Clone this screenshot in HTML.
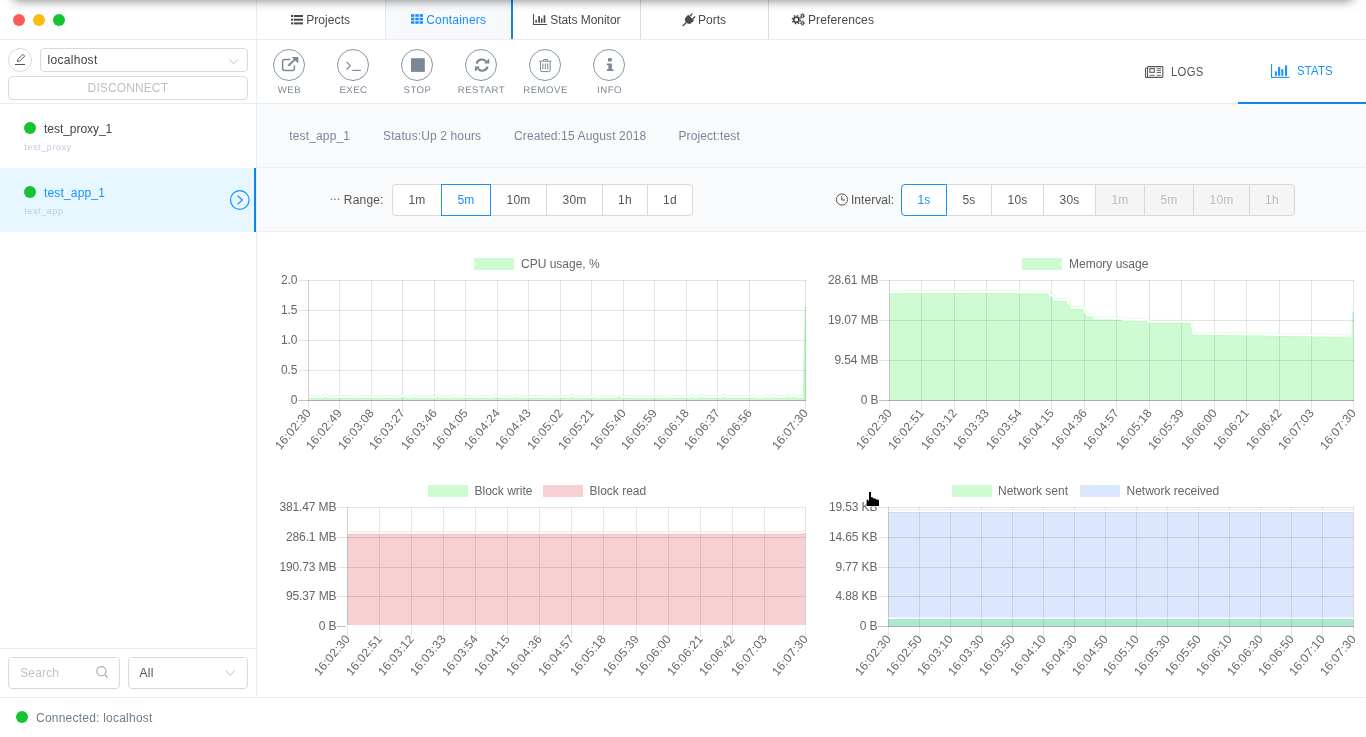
<!DOCTYPE html>
<html><head><meta charset="utf-8"><title>Containers</title>
<style>
*{box-sizing:border-box;margin:0;padding:0}
html,body{width:1366px;height:737px;overflow:hidden;background:#fff;font-family:"Liberation Sans",sans-serif;font-size:12px;color:#4a4a4a}
.abs{position:absolute}
#root{position:relative;width:1366px;height:737px;overflow:hidden;background:transparent;will-change:transform}
.hl{position:absolute;height:1px;background:#e8eef6}
.vl{position:absolute;width:1px;background:#e8eef6}
.tl{position:absolute;top:14px;width:12px;height:12px;border-radius:50%}
.tabsep{position:absolute;top:0;width:1px;height:39px;background:#ddd}
.tx{position:absolute;line-height:14px;white-space:nowrap}
.tabt{top:13px;color:#4a4a4a}
.cbtn{position:absolute;top:49px;width:32px;height:32px;border:1px solid #8893a3;border-radius:50%}
.clab{position:absolute;top:85px;text-rendering:geometricPrecision;width:80px;text-align:center;color:#7c8797;line-height:12px;white-space:nowrap}
.info{top:129px;color:#7a8697}
.seg{position:absolute;top:184px;height:32px;border:1px solid #d9d9d9;background:#fff;line-height:30px;text-align:center;color:#555;white-space:nowrap}
.seg.sel{border-color:#1890ff;color:#1890ff;z-index:2}
.seg.dis{background:#f5f5f5;color:#bdbdbd}
.ct{font-family:"Liberation Sans",sans-serif;font-size:12px;fill:#666}
svg{position:absolute;left:0;top:0;overflow:visible}
</style></head>
<body><div id="root">

<!-- backgrounds -->
<div class="abs" style="left:386px;top:0;width:125px;height:39px;background:#f7f9fc"></div>
<div class="abs" style="left:511px;top:0;width:2px;height:39px;background:#1085e6"></div>
<div class="abs" style="left:257px;top:104px;width:1109px;height:128px;background:#f9fafc"></div>
<div class="abs" style="left:0;top:168px;width:254px;height:64px;background:#e6f7ff"></div>

<!-- traffic lights -->
<div class="tl" style="left:13px;background:#fc5b57"></div>
<div class="tl" style="left:33px;background:#fdbc12"></div>
<div class="tl" style="left:53px;background:#14c431"></div>

<!-- sidebar header -->
<div class="abs" style="left:8px;top:48px;width:24px;height:24px;border:1px solid #d9d9d9;border-radius:50%"></div>
<div class="abs" style="left:40px;top:48px;width:208px;height:24px;border:1px solid #d9d9d9;border-radius:4px"></div>
<div class="tx" style="left:47.6px;top:53px;color:#444;font-size:12px;letter-spacing:0.282px">localhost</div>
<div class="abs" style="left:8px;top:76px;width:240px;height:24px;border:1px solid #d9d9d9;border-radius:4px"></div>
<div class="tx" style="left:87.6px;top:81px;color:#bfbfbf;font-size:12px;letter-spacing:0.116px">DISCONNECT</div>

<!-- list -->
<div class="abs" style="left:24px;top:122px;width:12px;height:12px;border-radius:50%;background:#14c431"></div>
<div class="tx" style="left:44px;top:122px;color:#444;font-size:12px;letter-spacing:-0.042px">test_proxy_1</div>
<div class="tx" style="left:24.2px;top:142px;line-height:10px;color:#bccadd;font-size:9px;letter-spacing:.62px;text-rendering:geometricPrecision">test_proxy</div>

<div class="abs" style="left:24px;top:186px;width:12px;height:12px;border-radius:50%;background:#14c431"></div>
<div class="tx" style="left:44px;top:186px;color:#1890ff;font-size:12px;letter-spacing:0.162px">test_app_1</div>
<div class="tx" style="left:24.2px;top:206px;line-height:10px;color:#c1cbd4;font-size:9px;letter-spacing:.62px;text-rendering:geometricPrecision">test_app</div>

<!-- sidebar footer -->
<div class="abs" style="left:8px;top:657px;width:112px;height:32px;border:1px solid #d9d9d9;border-radius:4px"></div>
<div class="tx" style="left:20.2px;top:666px;color:#c3c3c3;font-size:12px;letter-spacing:0.163px">Search</div>
<div class="abs" style="left:128px;top:657px;width:120px;height:32px;border:1px solid #d9d9d9;border-radius:4px"></div>
<div class="tx" style="left:139.6px;top:666px;color:#555;font-size:12px;letter-spacing:0.221px">All</div>

<!-- status bar -->
<div class="abs" style="left:16px;top:711px;width:12px;height:12px;border-radius:50%;background:#14c431"></div>
<div class="tx" style="left:36px;top:711px;color:#6f7c8d;font-size:12px;letter-spacing:0.226px">Connected: localhost</div>

<!-- tabs text -->
<div class="tx tabt" style="left:306.2px;font-size:12px;letter-spacing:0.082px">Projects</div>
<div class="tx tabt" style="left:426.2px;color:#1890ff;font-size:12px;letter-spacing:0.197px">Containers</div>
<div class="tx tabt" style="left:550.2px;font-size:12px;letter-spacing:-0.026px">Stats Monitor</div>
<div class="tx tabt" style="left:698px;font-size:12px;letter-spacing:-0.002px">Ports</div>
<div class="tx tabt" style="left:808px;font-size:12px;letter-spacing:0.118px">Preferences</div>
<div class="tabsep" style="left:385px;background:#e0ecfa"></div>
<div class="tabsep" style="left:640px"></div>
<div class="tabsep" style="left:768px"></div>

<!-- toolbar -->
<div class="cbtn" style="left:273px"></div><div class="clab" style="left:249.5px;font-size:9.6px;letter-spacing:.5px">WEB</div>
<div class="cbtn" style="left:337px"></div><div class="clab" style="left:313.5px;font-size:9.6px;letter-spacing:.5px">EXEC</div>
<div class="cbtn" style="left:401px"></div><div class="clab" style="left:377.5px;font-size:9.6px;letter-spacing:.5px">STOP</div>
<div class="cbtn" style="left:465px"></div><div class="clab" style="left:441.5px;font-size:9.6px;letter-spacing:.5px">RESTART</div>
<div class="cbtn" style="left:529px"></div><div class="clab" style="left:505.5px;font-size:9.6px;letter-spacing:.5px">REMOVE</div>
<div class="cbtn" style="left:593px"></div><div class="clab" style="left:569.5px;font-size:9.6px;letter-spacing:.5px">INFO</div>

<div class="tx" style="left:1171px;top:65px;font-size:12px;letter-spacing:.35px;color:#555;transform:scaleX(.94);transform-origin:0 0">LOGS</div>
<div class="tx" style="left:1297px;top:64px;font-size:12px;letter-spacing:.22px;color:#1890ff;transform:scaleX(.94);transform-origin:0 0">STATS</div>
<div class="abs" style="left:1238px;top:102px;width:128px;height:2px;background:#1085e6"></div>

<!-- info row -->
<div class="tx info" style="left:289.2px;font-size:12px;letter-spacing:0.162px">test_app_1</div>
<div class="tx info" style="left:383px;font-size:12px;letter-spacing:0.126px">Status:Up 2 hours</div>
<div class="tx info" style="left:514px;font-size:12px;letter-spacing:0.132px">Created:15 August 2018</div>
<div class="tx info" style="left:678.4px;font-size:12px;letter-spacing:0.118px">Project:test</div>

<!-- range row -->
<div class="tx" style="left:343.8px;top:193px;color:#555;font-size:12px;letter-spacing:0.217px">Range:</div>
<div class="seg" style="left:392px;width:50px;border-radius:4px 0 0 4px;font-size:12px;letter-spacing:0.165px">1m</div>
<div class="seg" style="left:490px;width:57px;font-size:12px;letter-spacing:0.219px">10m</div>
<div class="seg" style="left:546px;width:57px;font-size:12px;letter-spacing:0.219px">30m</div>
<div class="seg" style="left:602px;width:46px;font-size:12px;letter-spacing:0.326px">1h</div>
<div class="seg" style="left:647px;width:46px;border-radius:0 4px 4px 0;font-size:12px;letter-spacing:0.326px">1d</div>
<div class="seg sel" style="left:441px;width:50px;font-size:12px;letter-spacing:0.165px">5m</div>

<div class="tx" style="left:851px;top:193px;color:#555;font-size:12px;letter-spacing:0.035px">Interval:</div>
<div class="seg" style="left:946px;width:46px;font-size:12px;letter-spacing:0.163px">5s</div>
<div class="seg" style="left:991px;width:53px;font-size:12px;letter-spacing:0.217px">10s</div>
<div class="seg" style="left:1043px;width:53px;font-size:12px;letter-spacing:0.217px">30s</div>
<div class="seg dis" style="left:1095px;width:50px;font-size:12px;letter-spacing:0.165px">1m</div>
<div class="seg dis" style="left:1144px;width:50px;font-size:12px;letter-spacing:0.165px">5m</div>
<div class="seg dis" style="left:1193px;width:57px;font-size:12px;letter-spacing:0.219px">10m</div>
<div class="seg dis" style="left:1249px;width:46px;border-radius:0 4px 4px 0;font-size:12px;letter-spacing:0.326px">1h</div>
<div class="seg sel" style="left:901px;width:46px;border-radius:4px 0 0 4px;font-size:12px;letter-spacing:0.163px">1s</div>

<!-- lines -->
<div class="hl" style="left:0;top:39px;width:1366px"></div>
<div class="hl" style="left:0;top:103px;width:1366px"></div>
<div class="hl" style="left:257px;top:167px;width:1109px"></div>
<div class="hl" style="left:257px;top:231px;width:1109px"></div>
<div class="hl" style="left:0;top:648px;width:256px"></div>
<div class="hl" style="left:0;top:697px;width:1366px"></div>
<div class="vl" style="left:256px;top:0;height:697px"></div>
<div class="abs" style="left:254px;top:168px;width:2px;height:64px;background:#1085e6"></div>
<div class="abs" style="left:1238px;top:102px;width:128px;height:2px;background:#1085e6"></div>

<svg width="1366" height="737" viewBox="0 0 1366 737">
<!-- tab: list -->
<g fill="#4a4a4a">
<rect x="291" y="15" width="2.2" height="2"/><rect x="294" y="15" width="9" height="2"/>
<rect x="291" y="18.7" width="2.2" height="2"/><rect x="294" y="18.7" width="9" height="2"/>
<rect x="291" y="22.4" width="2.2" height="2"/><rect x="294" y="22.4" width="9" height="2"/>
</g>
<!-- tab: grid -->
<g fill="#1890ff">
<rect x="411" y="14.2" width="3.4" height="2.6"/><rect x="415.3" y="14.2" width="3.4" height="2.6"/><rect x="419.6" y="14.2" width="3.4" height="2.6"/>
<rect x="411" y="17.7" width="3.4" height="2.6"/><rect x="415.3" y="17.7" width="3.4" height="2.6"/><rect x="419.6" y="17.7" width="3.4" height="2.6"/>
<rect x="411" y="21.2" width="3.4" height="2.6"/><rect x="415.3" y="21.2" width="3.4" height="2.6"/><rect x="419.6" y="21.2" width="3.4" height="2.6"/>
</g>
<!-- tab: bar chart -->
<g fill="#4a4a4a">
<rect x="533" y="14" width="1" height="11"/><rect x="533" y="24" width="14" height="1"/>
<rect x="535.3" y="19.8" width="1.6" height="3"/><rect x="538.2" y="16.2" width="1.8" height="6.6"/><rect x="541" y="18.3" width="1.5" height="4.5"/><rect x="543.6" y="15.3" width="1.7" height="7.5"/>
</g>
<!-- tab: plug -->
<g transform="translate(688.7,20.1) rotate(45)" fill="#4a4a4a">
<rect x="-2.7" y="-7.2" width="1.4" height="4.2" rx=".6"/><rect x="1.3" y="-7.2" width="1.4" height="4.2" rx=".6"/>
<path d="M-4.1 -3.4 H4.1 V-0.6 A4.1 4.1 0 0 1 -4.1 -0.6 Z"/>
<rect x="-.7" y="3" width="1.4" height="5.4"/>
</g>
<!-- tab: cogs -->
<g fill="none" stroke="#4a4a4a">
<circle cx="796.4" cy="19.7" r="2.6" stroke-width="1.7"/>
<circle cx="796.4" cy="19.7" r="4.1" stroke-width="1.3" stroke-dasharray="1.6 1.62"/>
<circle cx="802.5" cy="15.9" r="1.3" stroke-width="1.1"/>
<circle cx="802.5" cy="15.9" r="2.2" stroke-width=".9" stroke-dasharray=".9 .83"/>
<circle cx="802.5" cy="23" r="1.3" stroke-width="1.1"/>
<circle cx="802.5" cy="23" r="2.2" stroke-width=".9" stroke-dasharray=".9 .83"/>
</g>
<!-- pencil -->
<g stroke="#555" fill="none" stroke-width="1">
<path d="M15 64.5 H25"/>
<path d="M17.3 61.4 L17.9 59.3 L22.9 54.3 L24.7 56.1 L19.7 61.1 Z" stroke-linejoin="round"/>
</g>
<!-- select chevrons -->
<path d="M229.5 59.6 L233.7 63.8 L237.9 59.6" fill="none" stroke="#bfbfbf" stroke-width="1"/>
<path d="M225.8 670.3 L230.2 675.6 L234.6 670.3" fill="none" stroke="#bfbfbf" stroke-width="1"/>
<!-- search icon -->
<g fill="none" stroke="#a6a6a6" stroke-width="1.1"><circle cx="101.4" cy="671.2" r="4.6"/><path d="M104.8 674.6 L107.6 677.5"/></g>
<!-- right circle -->
<g fill="none" stroke="#1890ff" stroke-width="1.2"><circle cx="239.8" cy="200" r="9.3"/><path d="M237.6 195.6 L242.2 200 L237.6 204.4" stroke-width="1.3"/></g>
<!-- toolbar icons -->
<g fill="none" stroke="#7b8696" stroke-width="1.5">
<path d="M290.3 59.6 H284.6 Q282.6 59.6 282.6 61.6 V68.4 Q282.6 70.4 284.6 70.4 H292.4 Q294.4 70.4 294.4 68.4 V65.6"/>
<path d="M288.4 65.7 L295.6 58.6" stroke-width="2"/>
</g>
<path d="M291.6 57 H298.3 V63.6 Z" fill="#7b8696"/>
<g fill="none" stroke="#7b8696" stroke-width="1.1"><path d="M346.6 62 L350.3 65.7 L346.6 69.5"/><path d="M352.3 70.4 H360.9"/></g>
<rect x="411" y="58.2" width="13.8" height="13.7" fill="#7b8696"/>
<!-- refresh -->
<g fill="none" stroke="#7b8696" stroke-width="2.1">
<path d="M476.6 63.6 A5.6 5.6 0 0 1 486.2 61.4"/>
<path d="M487.6 66.6 A5.6 5.6 0 0 1 478 68.8"/>
</g>
<path d="M489.3 58.4 V63.6 H484.1 Z" fill="#7b8696"/>
<path d="M474.9 71.8 V66.6 H480.1 Z" fill="#7b8696"/>
<!-- trash -->
<g fill="none" stroke="#7b8696" stroke-width="1">
<path d="M539 61.2 H551.6"/>
<path d="M543.6 61 V59.4 H547.4 V61"/>
<path d="M540.5 61.4 V70.2 Q540.5 71.6 542 71.6 H548.6 Q550.1 71.6 550.1 70.2 V61.4"/>
<path d="M542.9 63.5 V69.3 M545.3 63.5 V69.3 M547.7 63.5 V69.3"/>
</g>
<!-- info -->
<g fill="#7b8696">
<rect x="608" y="58.2" width="3.8" height="3.2"/>
<path d="M606.8 63.6 H611.8 V69.2 H613.4 V71 H606.8 V69.2 H608.4 V65.3 H606.8 Z"/>
</g>
<!-- logs icon -->
<g fill="none" stroke="#555" stroke-width="1.1">
<rect x="1147.5" y="66.6" width="15.3" height="10.8" rx=".8"/>
<path d="M1147.5 68 H1146.4 Q1145.5 68 1145.5 69 V76.4 Q1145.5 77.4 1146.5 77.4 H1148"/>
<rect x="1149.9" y="68.6" width="4.4" height="3.7"/>
<path d="M1156.6 68.7 H1161 M1156.6 70.6 H1161 M1156.6 72.5 H1161 M1149.6 75.3 H1154.6 M1156.6 75.3 H1161" stroke-width=".9"/>
</g>
<!-- stats icon -->
<g fill="#1890ff">
<rect x="1271" y="64.2" width="1.1" height="13.6"/><rect x="1271" y="76.8" width="18.4" height="1.1"/>
<rect x="1274.8" y="71.4" width="2.1" height="4.4"/><rect x="1278.1" y="67" width="2.1" height="8.8"/><rect x="1281.3" y="69.2" width="2" height="6.6"/><rect x="1285" y="65.4" width="2.1" height="10.4"/>
</g>
<!-- ellipsis -->
<g fill="#666"><circle cx="331.5" cy="199.2" r=".75"/><circle cx="335" cy="199.2" r=".75"/><circle cx="338.5" cy="199.2" r=".75"/></g>
<!-- clock -->
<g fill="none" stroke="#555" stroke-width="1"><circle cx="842" cy="199.5" r="5.6"/><path d="M841.8 196.2 V200 H845"/></g>
</svg>


<svg class="abs" style="left:0;top:0" width="1366" height="737" viewBox="0 0 1366 737" shape-rendering="auto">
<path d="M308.5 397.1 L310.2 396.9 L311.8 397.0 L313.5 397.3 L315.1 397.4 L316.8 397.3 L318.4 397.1 L320.1 397.3 L321.8 396.9 L323.4 397.0 L325.1 394.9 L326.7 396.8 L328.4 397.3 L330.0 397.2 L331.7 397.2 L333.4 396.9 L335.0 397.0 L336.7 397.3 L338.3 396.9 L340.0 397.2 L341.6 397.1 L343.3 396.8 L344.9 397.2 L346.6 397.0 L348.3 396.9 L349.9 396.7 L351.6 397.1 L353.2 397.3 L354.9 397.4 L356.5 396.8 L358.2 396.7 L359.9 396.9 L361.5 397.0 L363.2 396.8 L364.8 397.0 L366.5 397.3 L368.1 396.9 L369.8 396.8 L371.5 397.1 L373.1 397.4 L374.8 397.3 L376.4 397.3 L378.1 397.3 L379.7 397.1 L381.4 397.3 L383.1 397.0 L384.7 396.8 L386.4 397.2 L388.0 397.1 L389.7 396.7 L391.3 397.3 L393.0 397.2 L394.6 397.0 L396.3 397.4 L398.0 397.1 L399.6 396.7 L401.3 397.0 L402.9 395.1 L404.6 396.7 L406.2 396.8 L407.9 397.1 L409.6 397.3 L411.2 397.3 L412.9 397.2 L414.5 395.3 L416.2 397.4 L417.8 397.3 L419.5 397.4 L421.2 396.9 L422.8 397.2 L424.5 397.1 L426.1 396.8 L427.8 397.0 L429.4 397.3 L431.1 397.1 L432.8 396.8 L434.4 397.4 L436.1 397.0 L437.7 395.2 L439.4 397.0 L441.0 396.8 L442.7 397.2 L444.3 397.3 L446.0 397.0 L447.7 397.1 L449.3 396.8 L451.0 396.8 L452.6 396.8 L454.3 397.2 L455.9 395.3 L457.6 397.4 L459.3 397.2 L460.9 396.7 L462.6 396.7 L464.2 396.7 L465.9 397.2 L467.5 397.2 L469.2 396.9 L470.9 396.8 L472.5 396.9 L474.2 397.3 L475.8 396.7 L477.5 396.8 L479.1 397.3 L480.8 397.1 L482.4 396.7 L484.1 397.1 L485.8 396.9 L487.4 397.3 L489.1 396.7 L490.7 397.3 L492.4 396.7 L494.0 397.1 L495.7 395.5 L497.4 396.7 L499.0 397.0 L500.7 397.1 L502.3 396.8 L504.0 397.2 L505.6 397.2 L507.3 397.2 L509.0 397.3 L510.6 397.1 L512.3 397.0 L513.9 397.1 L515.6 397.0 L517.2 395.2 L518.9 397.1 L520.6 397.4 L522.2 397.3 L523.9 396.9 L525.5 397.1 L527.2 397.0 L528.8 397.3 L530.5 397.2 L532.1 396.8 L533.8 397.0 L535.5 396.7 L537.1 396.9 L538.8 397.0 L540.4 397.1 L542.1 397.0 L543.7 396.9 L545.4 396.7 L547.1 397.0 L548.7 396.8 L550.4 397.3 L552.0 397.3 L553.7 397.3 L555.3 396.8 L557.0 397.3 L558.7 396.9 L560.3 396.7 L562.0 397.2 L563.6 397.1 L565.3 396.7 L566.9 397.3 L568.6 397.0 L570.3 397.2 L571.9 395.1 L573.6 397.0 L575.2 397.4 L576.9 396.9 L578.5 397.3 L580.2 396.8 L581.9 397.3 L583.5 397.4 L585.2 397.2 L586.8 397.1 L588.5 396.8 L590.1 397.3 L591.8 397.0 L593.4 395.5 L595.1 396.9 L596.8 397.3 L598.4 396.9 L600.1 397.3 L601.7 397.3 L603.4 397.1 L605.0 397.0 L606.7 397.2 L608.4 397.0 L610.0 397.3 L611.7 397.3 L613.3 397.2 L615.0 396.8 L616.6 397.0 L618.3 395.3 L620.0 395.4 L621.6 396.9 L623.3 397.2 L624.9 396.7 L626.6 396.8 L628.2 397.0 L629.9 397.1 L631.5 396.9 L633.2 397.1 L634.9 396.9 L636.5 397.1 L638.2 397.3 L639.8 397.3 L641.5 397.2 L643.1 397.3 L644.8 396.8 L646.5 397.2 L648.1 397.2 L649.8 397.3 L651.4 397.2 L653.1 396.7 L654.7 397.2 L656.4 397.2 L658.1 397.4 L659.7 397.0 L661.4 397.2 L663.0 397.4 L664.7 397.3 L666.3 395.5 L668.0 397.2 L669.7 397.0 L671.3 396.8 L673.0 396.9 L674.6 397.1 L676.3 396.7 L677.9 396.9 L679.6 397.3 L681.2 396.7 L682.9 396.9 L684.6 397.3 L686.2 397.0 L687.9 396.8 L689.5 397.0 L691.2 396.9 L692.8 395.4 L694.5 397.3 L696.2 397.3 L697.8 397.0 L699.5 396.9 L701.1 395.2 L702.8 396.8 L704.4 397.0 L706.1 396.9 L707.8 396.8 L709.4 397.3 L711.1 396.9 L712.7 396.8 L714.4 397.0 L716.0 397.0 L717.7 396.8 L719.4 396.9 L721.0 397.3 L722.7 396.8 L724.3 395.2 L726.0 397.3 L727.6 396.9 L729.3 396.9 L731.0 397.0 L732.6 397.0 L734.3 396.7 L735.9 396.7 L737.6 397.4 L739.2 396.8 L740.9 397.1 L742.5 397.2 L744.2 397.2 L745.9 397.3 L747.5 396.7 L749.2 396.8 L750.8 396.7 L752.5 397.2 L754.1 395.2 L755.8 397.4 L757.5 397.1 L759.1 397.3 L760.8 397.2 L762.4 397.4 L764.1 396.8 L765.7 396.7 L767.4 396.7 L769.1 397.1 L770.7 396.7 L772.4 397.1 L774.0 395.4 L775.7 397.3 L777.3 397.2 L779.0 397.2 L780.6 397.0 L782.3 397.1 L784.0 396.7 L785.6 396.9 L787.3 396.7 L788.9 395.1 L790.6 396.9 L792.2 396.8 L793.9 395.4 L795.6 396.7 L797.2 397.0 L798.9 397.2 L800.5 396.7 L802.2 396.9 L803.8 397.0 L803.8 400.0 L308.5 400.0 Z" fill="#cefbd2"/>
<path d="M802.8 400.0 L804.8 306.3 L806.0 306.3 L806.0 400.0 Z" fill="#bdf7c3"/>
<rect x="308" y="280" width="1" height="131" fill="rgba(0,0,0,.1)"/>
<rect x="339" y="280" width="1" height="131" fill="rgba(0,0,0,.1)"/>
<rect x="371" y="280" width="1" height="131" fill="rgba(0,0,0,.1)"/>
<rect x="402" y="280" width="1" height="131" fill="rgba(0,0,0,.1)"/>
<rect x="434" y="280" width="1" height="131" fill="rgba(0,0,0,.1)"/>
<rect x="465" y="280" width="1" height="131" fill="rgba(0,0,0,.1)"/>
<rect x="497" y="280" width="1" height="131" fill="rgba(0,0,0,.1)"/>
<rect x="528" y="280" width="1" height="131" fill="rgba(0,0,0,.1)"/>
<rect x="560" y="280" width="1" height="131" fill="rgba(0,0,0,.1)"/>
<rect x="591" y="280" width="1" height="131" fill="rgba(0,0,0,.1)"/>
<rect x="623" y="280" width="1" height="131" fill="rgba(0,0,0,.1)"/>
<rect x="654" y="280" width="1" height="131" fill="rgba(0,0,0,.1)"/>
<rect x="686" y="280" width="1" height="131" fill="rgba(0,0,0,.1)"/>
<rect x="717" y="280" width="1" height="131" fill="rgba(0,0,0,.1)"/>
<rect x="749" y="280" width="1" height="131" fill="rgba(0,0,0,.1)"/>
<rect x="805" y="280" width="1" height="131" fill="rgba(0,0,0,.1)"/>
<rect x="298" y="280" width="508" height="1" fill="rgba(0,0,0,.1)"/>
<rect x="298" y="310" width="508" height="1" fill="rgba(0,0,0,.1)"/>
<rect x="298" y="340" width="508" height="1" fill="rgba(0,0,0,.1)"/>
<rect x="298" y="370" width="508" height="1" fill="rgba(0,0,0,.1)"/>
<rect x="298" y="400" width="508" height="1" fill="rgba(0,0,0,.25)"/>
<rect x="308" y="280" width="1" height="121" fill="rgba(0,0,0,.1)"/>
<rect x="308" y="400" width="498" height="1" fill="rgba(0,0,0,.1)"/>
<path d="M308.5 397.1 L310.2 396.9 L311.8 397.0 L313.5 397.3 L315.1 397.4 L316.8 397.3 L318.4 397.1 L320.1 397.3 L321.8 396.9 L323.4 397.0 L325.1 394.9 L326.7 396.8 L328.4 397.3 L330.0 397.2 L331.7 397.2 L333.4 396.9 L335.0 397.0 L336.7 397.3 L338.3 396.9 L340.0 397.2 L341.6 397.1 L343.3 396.8 L344.9 397.2 L346.6 397.0 L348.3 396.9 L349.9 396.7 L351.6 397.1 L353.2 397.3 L354.9 397.4 L356.5 396.8 L358.2 396.7 L359.9 396.9 L361.5 397.0 L363.2 396.8 L364.8 397.0 L366.5 397.3 L368.1 396.9 L369.8 396.8 L371.5 397.1 L373.1 397.4 L374.8 397.3 L376.4 397.3 L378.1 397.3 L379.7 397.1 L381.4 397.3 L383.1 397.0 L384.7 396.8 L386.4 397.2 L388.0 397.1 L389.7 396.7 L391.3 397.3 L393.0 397.2 L394.6 397.0 L396.3 397.4 L398.0 397.1 L399.6 396.7 L401.3 397.0 L402.9 395.1 L404.6 396.7 L406.2 396.8 L407.9 397.1 L409.6 397.3 L411.2 397.3 L412.9 397.2 L414.5 395.3 L416.2 397.4 L417.8 397.3 L419.5 397.4 L421.2 396.9 L422.8 397.2 L424.5 397.1 L426.1 396.8 L427.8 397.0 L429.4 397.3 L431.1 397.1 L432.8 396.8 L434.4 397.4 L436.1 397.0 L437.7 395.2 L439.4 397.0 L441.0 396.8 L442.7 397.2 L444.3 397.3 L446.0 397.0 L447.7 397.1 L449.3 396.8 L451.0 396.8 L452.6 396.8 L454.3 397.2 L455.9 395.3 L457.6 397.4 L459.3 397.2 L460.9 396.7 L462.6 396.7 L464.2 396.7 L465.9 397.2 L467.5 397.2 L469.2 396.9 L470.9 396.8 L472.5 396.9 L474.2 397.3 L475.8 396.7 L477.5 396.8 L479.1 397.3 L480.8 397.1 L482.4 396.7 L484.1 397.1 L485.8 396.9 L487.4 397.3 L489.1 396.7 L490.7 397.3 L492.4 396.7 L494.0 397.1 L495.7 395.5 L497.4 396.7 L499.0 397.0 L500.7 397.1 L502.3 396.8 L504.0 397.2 L505.6 397.2 L507.3 397.2 L509.0 397.3 L510.6 397.1 L512.3 397.0 L513.9 397.1 L515.6 397.0 L517.2 395.2 L518.9 397.1 L520.6 397.4 L522.2 397.3 L523.9 396.9 L525.5 397.1 L527.2 397.0 L528.8 397.3 L530.5 397.2 L532.1 396.8 L533.8 397.0 L535.5 396.7 L537.1 396.9 L538.8 397.0 L540.4 397.1 L542.1 397.0 L543.7 396.9 L545.4 396.7 L547.1 397.0 L548.7 396.8 L550.4 397.3 L552.0 397.3 L553.7 397.3 L555.3 396.8 L557.0 397.3 L558.7 396.9 L560.3 396.7 L562.0 397.2 L563.6 397.1 L565.3 396.7 L566.9 397.3 L568.6 397.0 L570.3 397.2 L571.9 395.1 L573.6 397.0 L575.2 397.4 L576.9 396.9 L578.5 397.3 L580.2 396.8 L581.9 397.3 L583.5 397.4 L585.2 397.2 L586.8 397.1 L588.5 396.8 L590.1 397.3 L591.8 397.0 L593.4 395.5 L595.1 396.9 L596.8 397.3 L598.4 396.9 L600.1 397.3 L601.7 397.3 L603.4 397.1 L605.0 397.0 L606.7 397.2 L608.4 397.0 L610.0 397.3 L611.7 397.3 L613.3 397.2 L615.0 396.8 L616.6 397.0 L618.3 395.3 L620.0 395.4 L621.6 396.9 L623.3 397.2 L624.9 396.7 L626.6 396.8 L628.2 397.0 L629.9 397.1 L631.5 396.9 L633.2 397.1 L634.9 396.9 L636.5 397.1 L638.2 397.3 L639.8 397.3 L641.5 397.2 L643.1 397.3 L644.8 396.8 L646.5 397.2 L648.1 397.2 L649.8 397.3 L651.4 397.2 L653.1 396.7 L654.7 397.2 L656.4 397.2 L658.1 397.4 L659.7 397.0 L661.4 397.2 L663.0 397.4 L664.7 397.3 L666.3 395.5 L668.0 397.2 L669.7 397.0 L671.3 396.8 L673.0 396.9 L674.6 397.1 L676.3 396.7 L677.9 396.9 L679.6 397.3 L681.2 396.7 L682.9 396.9 L684.6 397.3 L686.2 397.0 L687.9 396.8 L689.5 397.0 L691.2 396.9 L692.8 395.4 L694.5 397.3 L696.2 397.3 L697.8 397.0 L699.5 396.9 L701.1 395.2 L702.8 396.8 L704.4 397.0 L706.1 396.9 L707.8 396.8 L709.4 397.3 L711.1 396.9 L712.7 396.8 L714.4 397.0 L716.0 397.0 L717.7 396.8 L719.4 396.9 L721.0 397.3 L722.7 396.8 L724.3 395.2 L726.0 397.3 L727.6 396.9 L729.3 396.9 L731.0 397.0 L732.6 397.0 L734.3 396.7 L735.9 396.7 L737.6 397.4 L739.2 396.8 L740.9 397.1 L742.5 397.2 L744.2 397.2 L745.9 397.3 L747.5 396.7 L749.2 396.8 L750.8 396.7 L752.5 397.2 L754.1 395.2 L755.8 397.4 L757.5 397.1 L759.1 397.3 L760.8 397.2 L762.4 397.4 L764.1 396.8 L765.7 396.7 L767.4 396.7 L769.1 397.1 L770.7 396.7 L772.4 397.1 L774.0 395.4 L775.7 397.3 L777.3 397.2 L779.0 397.2 L780.6 397.0 L782.3 397.1 L784.0 396.7 L785.6 396.9 L787.3 396.7 L788.9 395.1 L790.6 396.9 L792.2 396.8 L793.9 395.4 L795.6 396.7 L797.2 397.0 L798.9 397.2 L800.5 396.7 L802.2 396.9 L803.8 397.0" fill="none" stroke="rgba(170,245,175,.35)" stroke-width="3.8" stroke-linejoin="round"/><path d="M308.5 397.1 L310.2 396.9 L311.8 397.0 L313.5 397.3 L315.1 397.4 L316.8 397.3 L318.4 397.1 L320.1 397.3 L321.8 396.9 L323.4 397.0 L325.1 394.9 L326.7 396.8 L328.4 397.3 L330.0 397.2 L331.7 397.2 L333.4 396.9 L335.0 397.0 L336.7 397.3 L338.3 396.9 L340.0 397.2 L341.6 397.1 L343.3 396.8 L344.9 397.2 L346.6 397.0 L348.3 396.9 L349.9 396.7 L351.6 397.1 L353.2 397.3 L354.9 397.4 L356.5 396.8 L358.2 396.7 L359.9 396.9 L361.5 397.0 L363.2 396.8 L364.8 397.0 L366.5 397.3 L368.1 396.9 L369.8 396.8 L371.5 397.1 L373.1 397.4 L374.8 397.3 L376.4 397.3 L378.1 397.3 L379.7 397.1 L381.4 397.3 L383.1 397.0 L384.7 396.8 L386.4 397.2 L388.0 397.1 L389.7 396.7 L391.3 397.3 L393.0 397.2 L394.6 397.0 L396.3 397.4 L398.0 397.1 L399.6 396.7 L401.3 397.0 L402.9 395.1 L404.6 396.7 L406.2 396.8 L407.9 397.1 L409.6 397.3 L411.2 397.3 L412.9 397.2 L414.5 395.3 L416.2 397.4 L417.8 397.3 L419.5 397.4 L421.2 396.9 L422.8 397.2 L424.5 397.1 L426.1 396.8 L427.8 397.0 L429.4 397.3 L431.1 397.1 L432.8 396.8 L434.4 397.4 L436.1 397.0 L437.7 395.2 L439.4 397.0 L441.0 396.8 L442.7 397.2 L444.3 397.3 L446.0 397.0 L447.7 397.1 L449.3 396.8 L451.0 396.8 L452.6 396.8 L454.3 397.2 L455.9 395.3 L457.6 397.4 L459.3 397.2 L460.9 396.7 L462.6 396.7 L464.2 396.7 L465.9 397.2 L467.5 397.2 L469.2 396.9 L470.9 396.8 L472.5 396.9 L474.2 397.3 L475.8 396.7 L477.5 396.8 L479.1 397.3 L480.8 397.1 L482.4 396.7 L484.1 397.1 L485.8 396.9 L487.4 397.3 L489.1 396.7 L490.7 397.3 L492.4 396.7 L494.0 397.1 L495.7 395.5 L497.4 396.7 L499.0 397.0 L500.7 397.1 L502.3 396.8 L504.0 397.2 L505.6 397.2 L507.3 397.2 L509.0 397.3 L510.6 397.1 L512.3 397.0 L513.9 397.1 L515.6 397.0 L517.2 395.2 L518.9 397.1 L520.6 397.4 L522.2 397.3 L523.9 396.9 L525.5 397.1 L527.2 397.0 L528.8 397.3 L530.5 397.2 L532.1 396.8 L533.8 397.0 L535.5 396.7 L537.1 396.9 L538.8 397.0 L540.4 397.1 L542.1 397.0 L543.7 396.9 L545.4 396.7 L547.1 397.0 L548.7 396.8 L550.4 397.3 L552.0 397.3 L553.7 397.3 L555.3 396.8 L557.0 397.3 L558.7 396.9 L560.3 396.7 L562.0 397.2 L563.6 397.1 L565.3 396.7 L566.9 397.3 L568.6 397.0 L570.3 397.2 L571.9 395.1 L573.6 397.0 L575.2 397.4 L576.9 396.9 L578.5 397.3 L580.2 396.8 L581.9 397.3 L583.5 397.4 L585.2 397.2 L586.8 397.1 L588.5 396.8 L590.1 397.3 L591.8 397.0 L593.4 395.5 L595.1 396.9 L596.8 397.3 L598.4 396.9 L600.1 397.3 L601.7 397.3 L603.4 397.1 L605.0 397.0 L606.7 397.2 L608.4 397.0 L610.0 397.3 L611.7 397.3 L613.3 397.2 L615.0 396.8 L616.6 397.0 L618.3 395.3 L620.0 395.4 L621.6 396.9 L623.3 397.2 L624.9 396.7 L626.6 396.8 L628.2 397.0 L629.9 397.1 L631.5 396.9 L633.2 397.1 L634.9 396.9 L636.5 397.1 L638.2 397.3 L639.8 397.3 L641.5 397.2 L643.1 397.3 L644.8 396.8 L646.5 397.2 L648.1 397.2 L649.8 397.3 L651.4 397.2 L653.1 396.7 L654.7 397.2 L656.4 397.2 L658.1 397.4 L659.7 397.0 L661.4 397.2 L663.0 397.4 L664.7 397.3 L666.3 395.5 L668.0 397.2 L669.7 397.0 L671.3 396.8 L673.0 396.9 L674.6 397.1 L676.3 396.7 L677.9 396.9 L679.6 397.3 L681.2 396.7 L682.9 396.9 L684.6 397.3 L686.2 397.0 L687.9 396.8 L689.5 397.0 L691.2 396.9 L692.8 395.4 L694.5 397.3 L696.2 397.3 L697.8 397.0 L699.5 396.9 L701.1 395.2 L702.8 396.8 L704.4 397.0 L706.1 396.9 L707.8 396.8 L709.4 397.3 L711.1 396.9 L712.7 396.8 L714.4 397.0 L716.0 397.0 L717.7 396.8 L719.4 396.9 L721.0 397.3 L722.7 396.8 L724.3 395.2 L726.0 397.3 L727.6 396.9 L729.3 396.9 L731.0 397.0 L732.6 397.0 L734.3 396.7 L735.9 396.7 L737.6 397.4 L739.2 396.8 L740.9 397.1 L742.5 397.2 L744.2 397.2 L745.9 397.3 L747.5 396.7 L749.2 396.8 L750.8 396.7 L752.5 397.2 L754.1 395.2 L755.8 397.4 L757.5 397.1 L759.1 397.3 L760.8 397.2 L762.4 397.4 L764.1 396.8 L765.7 396.7 L767.4 396.7 L769.1 397.1 L770.7 396.7 L772.4 397.1 L774.0 395.4 L775.7 397.3 L777.3 397.2 L779.0 397.2 L780.6 397.0 L782.3 397.1 L784.0 396.7 L785.6 396.9 L787.3 396.7 L788.9 395.1 L790.6 396.9 L792.2 396.8 L793.9 395.4 L795.6 396.7 L797.2 397.0 L798.9 397.2 L800.5 396.7 L802.2 396.9 L803.8 397.0" fill="none" stroke="#fff" stroke-width="1.8" stroke-linejoin="round"/>

<text class="ct" x="297.4" y="284.2" text-anchor="end" style="letter-spacing:-0.120px">2.0</text>
<text class="ct" x="297.4" y="314.2" text-anchor="end" style="letter-spacing:-0.120px">1.5</text>
<text class="ct" x="297.4" y="344.2" text-anchor="end" style="letter-spacing:-0.120px">1.0</text>
<text class="ct" x="297.4" y="374.2" text-anchor="end" style="letter-spacing:-0.120px">0.5</text>
<text class="ct" x="297.4" y="404.2" text-anchor="end" style="letter-spacing:-0.120px">0</text>
<text class="ct" transform="translate(308.5,410.5) rotate(-50)" x="0" y="4.2" text-anchor="end" style="letter-spacing:0.250px">16:02:30</text>
<text class="ct" transform="translate(339.5,410.5) rotate(-50)" x="0" y="4.2" text-anchor="end" style="letter-spacing:0.250px">16:02:49</text>
<text class="ct" transform="translate(371.5,410.5) rotate(-50)" x="0" y="4.2" text-anchor="end" style="letter-spacing:0.250px">16:03:08</text>
<text class="ct" transform="translate(402.5,410.5) rotate(-50)" x="0" y="4.2" text-anchor="end" style="letter-spacing:0.250px">16:03:27</text>
<text class="ct" transform="translate(434.5,410.5) rotate(-50)" x="0" y="4.2" text-anchor="end" style="letter-spacing:0.250px">16:03:46</text>
<text class="ct" transform="translate(465.5,410.5) rotate(-50)" x="0" y="4.2" text-anchor="end" style="letter-spacing:0.250px">16:04:05</text>
<text class="ct" transform="translate(497.5,410.5) rotate(-50)" x="0" y="4.2" text-anchor="end" style="letter-spacing:0.250px">16:04:24</text>
<text class="ct" transform="translate(528.5,410.5) rotate(-50)" x="0" y="4.2" text-anchor="end" style="letter-spacing:0.250px">16:04:43</text>
<text class="ct" transform="translate(560.5,410.5) rotate(-50)" x="0" y="4.2" text-anchor="end" style="letter-spacing:0.250px">16:05:02</text>
<text class="ct" transform="translate(591.5,410.5) rotate(-50)" x="0" y="4.2" text-anchor="end" style="letter-spacing:0.250px">16:05:21</text>
<text class="ct" transform="translate(623.5,410.5) rotate(-50)" x="0" y="4.2" text-anchor="end" style="letter-spacing:0.250px">16:05:40</text>
<text class="ct" transform="translate(654.5,410.5) rotate(-50)" x="0" y="4.2" text-anchor="end" style="letter-spacing:0.250px">16:05:59</text>
<text class="ct" transform="translate(686.5,410.5) rotate(-50)" x="0" y="4.2" text-anchor="end" style="letter-spacing:0.250px">16:06:18</text>
<text class="ct" transform="translate(717.5,410.5) rotate(-50)" x="0" y="4.2" text-anchor="end" style="letter-spacing:0.250px">16:06:37</text>
<text class="ct" transform="translate(749.5,410.5) rotate(-50)" x="0" y="4.2" text-anchor="end" style="letter-spacing:0.250px">16:06:56</text>
<text class="ct" transform="translate(805.5,410.5) rotate(-50)" x="0" y="4.2" text-anchor="end" style="letter-spacing:0.250px">16:07:30</text>
<rect x="474" y="258" width="40" height="12" fill="#cefbd2"/>
<text class="ct" x="521" y="268.3" style="letter-spacing:0.000px">CPU usage, %</text>
<path d="M889.5 292.2 L985.0 292.0 L1049.0 292.6 L1049.8 295.4 L1053.5 295.4 L1054.0 300.1 L1068.0 300.1 L1068.3 303.7 L1071.0 303.7 L1071.5 307.9 L1084.5 307.9 L1085.0 312.5 L1086.2 312.5 L1086.7 315.3 L1094.0 315.3 L1094.6 318.4 L1121.6 318.4 L1122.2 319.7 L1147.5 319.7 L1148.6 321.7 L1191.6 321.7 L1192.3 328.0 L1193.4 333.7 L1260.0 334.6 L1320.0 335.6 L1351.2 336.4 L1351.2 400.0 L889.5 400.0 Z" fill="#cefbd2"/>
<path d="M1350.8 337 L1351.6 312 L1354 312 L1354 400 L1350.8 400 Z" fill="#cefbd2"/><path d="M1350.9 336.6 L1351.7 312" stroke="#fff" stroke-width="1" fill="none"/>
<rect x="889" y="280" width="1" height="131" fill="rgba(0,0,0,.1)"/>
<rect x="921" y="280" width="1" height="131" fill="rgba(0,0,0,.1)"/>
<rect x="954" y="280" width="1" height="131" fill="rgba(0,0,0,.1)"/>
<rect x="986" y="280" width="1" height="131" fill="rgba(0,0,0,.1)"/>
<rect x="1019" y="280" width="1" height="131" fill="rgba(0,0,0,.1)"/>
<rect x="1051" y="280" width="1" height="131" fill="rgba(0,0,0,.1)"/>
<rect x="1084" y="280" width="1" height="131" fill="rgba(0,0,0,.1)"/>
<rect x="1116" y="280" width="1" height="131" fill="rgba(0,0,0,.1)"/>
<rect x="1149" y="280" width="1" height="131" fill="rgba(0,0,0,.1)"/>
<rect x="1181" y="280" width="1" height="131" fill="rgba(0,0,0,.1)"/>
<rect x="1214" y="280" width="1" height="131" fill="rgba(0,0,0,.1)"/>
<rect x="1246" y="280" width="1" height="131" fill="rgba(0,0,0,.1)"/>
<rect x="1279" y="280" width="1" height="131" fill="rgba(0,0,0,.1)"/>
<rect x="1311" y="280" width="1" height="131" fill="rgba(0,0,0,.1)"/>
<rect x="1353" y="280" width="1" height="131" fill="rgba(0,0,0,.1)"/>
<rect x="879" y="280" width="475" height="1" fill="rgba(0,0,0,.1)"/>
<rect x="879" y="320" width="475" height="1" fill="rgba(0,0,0,.1)"/>
<rect x="879" y="360" width="475" height="1" fill="rgba(0,0,0,.1)"/>
<rect x="879" y="400" width="475" height="1" fill="rgba(0,0,0,.25)"/>
<rect x="889" y="280" width="1" height="121" fill="rgba(0,0,0,.1)"/>
<rect x="889" y="400" width="465" height="1" fill="rgba(0,0,0,.1)"/>
<path d="M889.5 292.2 L985.0 292.0 L1049.0 292.6 L1049.8 295.4 L1053.5 295.4 L1054.0 300.1 L1068.0 300.1 L1068.3 303.7 L1071.0 303.7 L1071.5 307.9 L1084.5 307.9 L1085.0 312.5 L1086.2 312.5 L1086.7 315.3 L1094.0 315.3 L1094.6 318.4 L1121.6 318.4 L1122.2 319.7 L1147.5 319.7 L1148.6 321.7 L1191.6 321.7 L1192.3 328.0 L1193.4 333.7 L1260.0 334.6 L1320.0 335.6 L1351.2 336.4" fill="none" stroke="rgba(170,245,175,.3)" stroke-width="4" stroke-linejoin="round"/><path d="M889.5 292.2 L985.0 292.0 L1049.0 292.6 L1049.8 295.4 L1053.5 295.4 L1054.0 300.1 L1068.0 300.1 L1068.3 303.7 L1071.0 303.7 L1071.5 307.9 L1084.5 307.9 L1085.0 312.5 L1086.2 312.5 L1086.7 315.3 L1094.0 315.3 L1094.6 318.4 L1121.6 318.4 L1122.2 319.7 L1147.5 319.7 L1148.6 321.7 L1191.6 321.7 L1192.3 328.0 L1193.4 333.7 L1260.0 334.6 L1320.0 335.6 L1351.2 336.4" fill="none" stroke="#fff" stroke-width="2" stroke-linejoin="round"/>

<text class="ct" x="878.4" y="284.2" text-anchor="end" style="letter-spacing:-0.120px">28.61 MB</text>
<text class="ct" x="878.4" y="324.2" text-anchor="end" style="letter-spacing:-0.120px">19.07 MB</text>
<text class="ct" x="878.4" y="364.2" text-anchor="end" style="letter-spacing:-0.120px">9.54 MB</text>
<text class="ct" x="878.4" y="404.2" text-anchor="end" style="letter-spacing:-0.120px">0 B</text>
<text class="ct" transform="translate(889.5,410.5) rotate(-50)" x="0" y="4.2" text-anchor="end" style="letter-spacing:0.250px">16:02:30</text>
<text class="ct" transform="translate(921.5,410.5) rotate(-50)" x="0" y="4.2" text-anchor="end" style="letter-spacing:0.250px">16:02:51</text>
<text class="ct" transform="translate(954.5,410.5) rotate(-50)" x="0" y="4.2" text-anchor="end" style="letter-spacing:0.250px">16:03:12</text>
<text class="ct" transform="translate(986.5,410.5) rotate(-50)" x="0" y="4.2" text-anchor="end" style="letter-spacing:0.250px">16:03:33</text>
<text class="ct" transform="translate(1019.5,410.5) rotate(-50)" x="0" y="4.2" text-anchor="end" style="letter-spacing:0.250px">16:03:54</text>
<text class="ct" transform="translate(1051.5,410.5) rotate(-50)" x="0" y="4.2" text-anchor="end" style="letter-spacing:0.250px">16:04:15</text>
<text class="ct" transform="translate(1084.5,410.5) rotate(-50)" x="0" y="4.2" text-anchor="end" style="letter-spacing:0.250px">16:04:36</text>
<text class="ct" transform="translate(1116.5,410.5) rotate(-50)" x="0" y="4.2" text-anchor="end" style="letter-spacing:0.250px">16:04:57</text>
<text class="ct" transform="translate(1149.5,410.5) rotate(-50)" x="0" y="4.2" text-anchor="end" style="letter-spacing:0.250px">16:05:18</text>
<text class="ct" transform="translate(1181.5,410.5) rotate(-50)" x="0" y="4.2" text-anchor="end" style="letter-spacing:0.250px">16:05:39</text>
<text class="ct" transform="translate(1214.5,410.5) rotate(-50)" x="0" y="4.2" text-anchor="end" style="letter-spacing:0.250px">16:06:00</text>
<text class="ct" transform="translate(1246.5,410.5) rotate(-50)" x="0" y="4.2" text-anchor="end" style="letter-spacing:0.250px">16:06:21</text>
<text class="ct" transform="translate(1279.5,410.5) rotate(-50)" x="0" y="4.2" text-anchor="end" style="letter-spacing:0.250px">16:06:42</text>
<text class="ct" transform="translate(1311.5,410.5) rotate(-50)" x="0" y="4.2" text-anchor="end" style="letter-spacing:0.250px">16:07:03</text>
<text class="ct" transform="translate(1353.5,410.5) rotate(-50)" x="0" y="4.2" text-anchor="end" style="letter-spacing:0.250px">16:07:30</text>
<rect x="1022" y="258" width="40" height="12" fill="#cefbd2"/>
<text class="ct" x="1069" y="268.3" style="letter-spacing:0.000px">Memory usage</text>
<path d="M347.5 533.2 L803.0 533.2 L805.5 531.5 L805.5 626.0 L347.5 626.0 Z" fill="#f7d0d1"/>

<rect x="347" y="507" width="1" height="130" fill="rgba(0,0,0,.1)"/>
<rect x="379" y="507" width="1" height="130" fill="rgba(0,0,0,.1)"/>
<rect x="411" y="507" width="1" height="130" fill="rgba(0,0,0,.1)"/>
<rect x="443" y="507" width="1" height="130" fill="rgba(0,0,0,.1)"/>
<rect x="475" y="507" width="1" height="130" fill="rgba(0,0,0,.1)"/>
<rect x="507" y="507" width="1" height="130" fill="rgba(0,0,0,.1)"/>
<rect x="539" y="507" width="1" height="130" fill="rgba(0,0,0,.1)"/>
<rect x="571" y="507" width="1" height="130" fill="rgba(0,0,0,.1)"/>
<rect x="603" y="507" width="1" height="130" fill="rgba(0,0,0,.1)"/>
<rect x="636" y="507" width="1" height="130" fill="rgba(0,0,0,.1)"/>
<rect x="668" y="507" width="1" height="130" fill="rgba(0,0,0,.1)"/>
<rect x="700" y="507" width="1" height="130" fill="rgba(0,0,0,.1)"/>
<rect x="732" y="507" width="1" height="130" fill="rgba(0,0,0,.1)"/>
<rect x="764" y="507" width="1" height="130" fill="rgba(0,0,0,.1)"/>
<rect x="805" y="507" width="1" height="130" fill="rgba(0,0,0,.1)"/>
<rect x="337" y="507" width="469" height="1" fill="rgba(0,0,0,.1)"/>
<rect x="337" y="537" width="469" height="1" fill="rgba(0,0,0,.1)"/>
<rect x="337" y="567" width="469" height="1" fill="rgba(0,0,0,.1)"/>
<rect x="337" y="596" width="469" height="1" fill="rgba(0,0,0,.1)"/>
<rect x="337" y="626" width="469" height="1" fill="rgba(0,0,0,.25)"/>
<rect x="347" y="507" width="1" height="120" fill="rgba(0,0,0,.1)"/>
<rect x="347" y="626" width="459" height="1" fill="rgba(0,0,0,.1)"/>
<path d="M347.5 533.2 L803.0 533.2 L805.5 531.5" fill="none" stroke="rgba(240,150,150,.3)" stroke-width="3.6" stroke-linejoin="round"/><path d="M347.5 533.2 L803.0 533.2 L805.5 531.5" fill="none" stroke="#fff" stroke-width="1.6" stroke-linejoin="round"/>
<path d="M346.0 625.9 L806.0 625.9" fill="none" stroke="#fff" stroke-width="2" stroke-linejoin="round"/>
<text class="ct" x="336.4" y="511.2" text-anchor="end" style="letter-spacing:-0.120px">381.47 MB</text>
<text class="ct" x="336.4" y="541.2" text-anchor="end" style="letter-spacing:-0.120px">286.1 MB</text>
<text class="ct" x="336.4" y="571.2" text-anchor="end" style="letter-spacing:-0.120px">190.73 MB</text>
<text class="ct" x="336.4" y="600.2" text-anchor="end" style="letter-spacing:-0.120px">95.37 MB</text>
<text class="ct" x="336.4" y="630.2" text-anchor="end" style="letter-spacing:-0.120px">0 B</text>
<text class="ct" transform="translate(347.5,636.5) rotate(-50)" x="0" y="4.2" text-anchor="end" style="letter-spacing:0.250px">16:02:30</text>
<text class="ct" transform="translate(379.5,636.5) rotate(-50)" x="0" y="4.2" text-anchor="end" style="letter-spacing:0.250px">16:02:51</text>
<text class="ct" transform="translate(411.5,636.5) rotate(-50)" x="0" y="4.2" text-anchor="end" style="letter-spacing:0.250px">16:03:12</text>
<text class="ct" transform="translate(443.5,636.5) rotate(-50)" x="0" y="4.2" text-anchor="end" style="letter-spacing:0.250px">16:03:33</text>
<text class="ct" transform="translate(475.5,636.5) rotate(-50)" x="0" y="4.2" text-anchor="end" style="letter-spacing:0.250px">16:03:54</text>
<text class="ct" transform="translate(507.5,636.5) rotate(-50)" x="0" y="4.2" text-anchor="end" style="letter-spacing:0.250px">16:04:15</text>
<text class="ct" transform="translate(539.5,636.5) rotate(-50)" x="0" y="4.2" text-anchor="end" style="letter-spacing:0.250px">16:04:36</text>
<text class="ct" transform="translate(571.5,636.5) rotate(-50)" x="0" y="4.2" text-anchor="end" style="letter-spacing:0.250px">16:04:57</text>
<text class="ct" transform="translate(603.5,636.5) rotate(-50)" x="0" y="4.2" text-anchor="end" style="letter-spacing:0.250px">16:05:18</text>
<text class="ct" transform="translate(636.5,636.5) rotate(-50)" x="0" y="4.2" text-anchor="end" style="letter-spacing:0.250px">16:05:39</text>
<text class="ct" transform="translate(668.5,636.5) rotate(-50)" x="0" y="4.2" text-anchor="end" style="letter-spacing:0.250px">16:06:00</text>
<text class="ct" transform="translate(700.5,636.5) rotate(-50)" x="0" y="4.2" text-anchor="end" style="letter-spacing:0.250px">16:06:21</text>
<text class="ct" transform="translate(732.5,636.5) rotate(-50)" x="0" y="4.2" text-anchor="end" style="letter-spacing:0.250px">16:06:42</text>
<text class="ct" transform="translate(764.5,636.5) rotate(-50)" x="0" y="4.2" text-anchor="end" style="letter-spacing:0.250px">16:07:03</text>
<text class="ct" transform="translate(805.5,636.5) rotate(-50)" x="0" y="4.2" text-anchor="end" style="letter-spacing:0.250px">16:07:30</text>
<rect x="428" y="485" width="40" height="12" fill="#cefbd2"/>
<text class="ct" x="474.5" y="495.3" style="letter-spacing:0.000px">Block write</text>
<rect x="543" y="485" width="40" height="12" fill="#f7d0d1"/>
<text class="ct" x="589.5" y="495.3" style="letter-spacing:0.000px">Block read</text>
<path d="M888.5 511.3 L1353.5 511.3 L1353.5 626.0 L888.5 626.0 Z" fill="#dce6fc"/>
<path d="M888.5 618.2 L1353.5 618.2 L1353.5 626.0 L888.5 626.0 Z" fill="#aee8ce"/>
<rect x="888" y="507" width="1" height="130" fill="rgba(0,0,0,.1)"/>
<rect x="919" y="507" width="1" height="130" fill="rgba(0,0,0,.1)"/>
<rect x="950" y="507" width="1" height="130" fill="rgba(0,0,0,.1)"/>
<rect x="981" y="507" width="1" height="130" fill="rgba(0,0,0,.1)"/>
<rect x="1012" y="507" width="1" height="130" fill="rgba(0,0,0,.1)"/>
<rect x="1043" y="507" width="1" height="130" fill="rgba(0,0,0,.1)"/>
<rect x="1074" y="507" width="1" height="130" fill="rgba(0,0,0,.1)"/>
<rect x="1105" y="507" width="1" height="130" fill="rgba(0,0,0,.1)"/>
<rect x="1136" y="507" width="1" height="130" fill="rgba(0,0,0,.1)"/>
<rect x="1167" y="507" width="1" height="130" fill="rgba(0,0,0,.1)"/>
<rect x="1198" y="507" width="1" height="130" fill="rgba(0,0,0,.1)"/>
<rect x="1229" y="507" width="1" height="130" fill="rgba(0,0,0,.1)"/>
<rect x="1260" y="507" width="1" height="130" fill="rgba(0,0,0,.1)"/>
<rect x="1291" y="507" width="1" height="130" fill="rgba(0,0,0,.1)"/>
<rect x="1322" y="507" width="1" height="130" fill="rgba(0,0,0,.1)"/>
<rect x="1353" y="507" width="1" height="130" fill="rgba(0,0,0,.1)"/>
<rect x="878" y="507" width="476" height="1" fill="rgba(0,0,0,.1)"/>
<rect x="878" y="537" width="476" height="1" fill="rgba(0,0,0,.1)"/>
<rect x="878" y="567" width="476" height="1" fill="rgba(0,0,0,.1)"/>
<rect x="878" y="596" width="476" height="1" fill="rgba(0,0,0,.1)"/>
<rect x="878" y="626" width="476" height="1" fill="rgba(0,0,0,.25)"/>
<rect x="888" y="507" width="1" height="120" fill="rgba(0,0,0,.1)"/>
<rect x="888" y="626" width="466" height="1" fill="rgba(0,0,0,.1)"/>
<path d="M888.5 511.3 L1353.5 511.3" fill="none" stroke="rgba(170,190,245,.3)" stroke-width="3.6" stroke-linejoin="round"/><path d="M888.5 511.3 L1353.5 511.3" fill="none" stroke="#fff" stroke-width="1.6" stroke-linejoin="round"/>
<path d="M888.5 618.2 L1353.5 618.2" fill="none" stroke="#fff" stroke-width="1.6" stroke-linejoin="round"/>
<text class="ct" x="877.4" y="511.2" text-anchor="end" style="letter-spacing:-0.120px">19.53 KB</text>
<text class="ct" x="877.4" y="541.2" text-anchor="end" style="letter-spacing:-0.120px">14.65 KB</text>
<text class="ct" x="877.4" y="571.2" text-anchor="end" style="letter-spacing:-0.120px">9.77 KB</text>
<text class="ct" x="877.4" y="600.2" text-anchor="end" style="letter-spacing:-0.120px">4.88 KB</text>
<text class="ct" x="877.4" y="630.2" text-anchor="end" style="letter-spacing:-0.120px">0 B</text>
<text class="ct" transform="translate(888.5,636.5) rotate(-50)" x="0" y="4.2" text-anchor="end" style="letter-spacing:0.250px">16:02:30</text>
<text class="ct" transform="translate(919.5,636.5) rotate(-50)" x="0" y="4.2" text-anchor="end" style="letter-spacing:0.250px">16:02:50</text>
<text class="ct" transform="translate(950.5,636.5) rotate(-50)" x="0" y="4.2" text-anchor="end" style="letter-spacing:0.250px">16:03:10</text>
<text class="ct" transform="translate(981.5,636.5) rotate(-50)" x="0" y="4.2" text-anchor="end" style="letter-spacing:0.250px">16:03:30</text>
<text class="ct" transform="translate(1012.5,636.5) rotate(-50)" x="0" y="4.2" text-anchor="end" style="letter-spacing:0.250px">16:03:50</text>
<text class="ct" transform="translate(1043.5,636.5) rotate(-50)" x="0" y="4.2" text-anchor="end" style="letter-spacing:0.250px">16:04:10</text>
<text class="ct" transform="translate(1074.5,636.5) rotate(-50)" x="0" y="4.2" text-anchor="end" style="letter-spacing:0.250px">16:04:30</text>
<text class="ct" transform="translate(1105.5,636.5) rotate(-50)" x="0" y="4.2" text-anchor="end" style="letter-spacing:0.250px">16:04:50</text>
<text class="ct" transform="translate(1136.5,636.5) rotate(-50)" x="0" y="4.2" text-anchor="end" style="letter-spacing:0.250px">16:05:10</text>
<text class="ct" transform="translate(1167.5,636.5) rotate(-50)" x="0" y="4.2" text-anchor="end" style="letter-spacing:0.250px">16:05:30</text>
<text class="ct" transform="translate(1198.5,636.5) rotate(-50)" x="0" y="4.2" text-anchor="end" style="letter-spacing:0.250px">16:05:50</text>
<text class="ct" transform="translate(1229.5,636.5) rotate(-50)" x="0" y="4.2" text-anchor="end" style="letter-spacing:0.250px">16:06:10</text>
<text class="ct" transform="translate(1260.5,636.5) rotate(-50)" x="0" y="4.2" text-anchor="end" style="letter-spacing:0.250px">16:06:30</text>
<text class="ct" transform="translate(1291.5,636.5) rotate(-50)" x="0" y="4.2" text-anchor="end" style="letter-spacing:0.250px">16:06:50</text>
<text class="ct" transform="translate(1322.5,636.5) rotate(-50)" x="0" y="4.2" text-anchor="end" style="letter-spacing:0.250px">16:07:10</text>
<text class="ct" transform="translate(1353.5,636.5) rotate(-50)" x="0" y="4.2" text-anchor="end" style="letter-spacing:0.250px">16:07:30</text>
<rect x="952" y="485" width="40" height="12" fill="#cefbd2"/>
<text class="ct" x="998" y="495.3" style="letter-spacing:0.000px">Network sent</text>
<rect x="1080" y="485" width="40" height="12" fill="#dce6fc"/>
<text class="ct" x="1126.5" y="495.3" style="letter-spacing:0.000px">Network received</text>
<path d="M869 492 L871 492 L871 497 L873 497.4 L873.4 498.4 L875.4 498.4 L876 499.4 L878 499.4 L879 500.4 L879 506 L866.6 506 L866.6 500 L868 499.4 L869 501.4 Z" fill="#000" stroke="#fff" stroke-width="1.6" paint-order="stroke" stroke-linejoin="round"/>
</svg>

<!-- top shadow -->
<div class="abs" style="left:14px;top:-30px;width:1338px;height:30px;box-shadow:0 0 11px rgba(0,0,0,.55)"></div>

</div></body></html>
